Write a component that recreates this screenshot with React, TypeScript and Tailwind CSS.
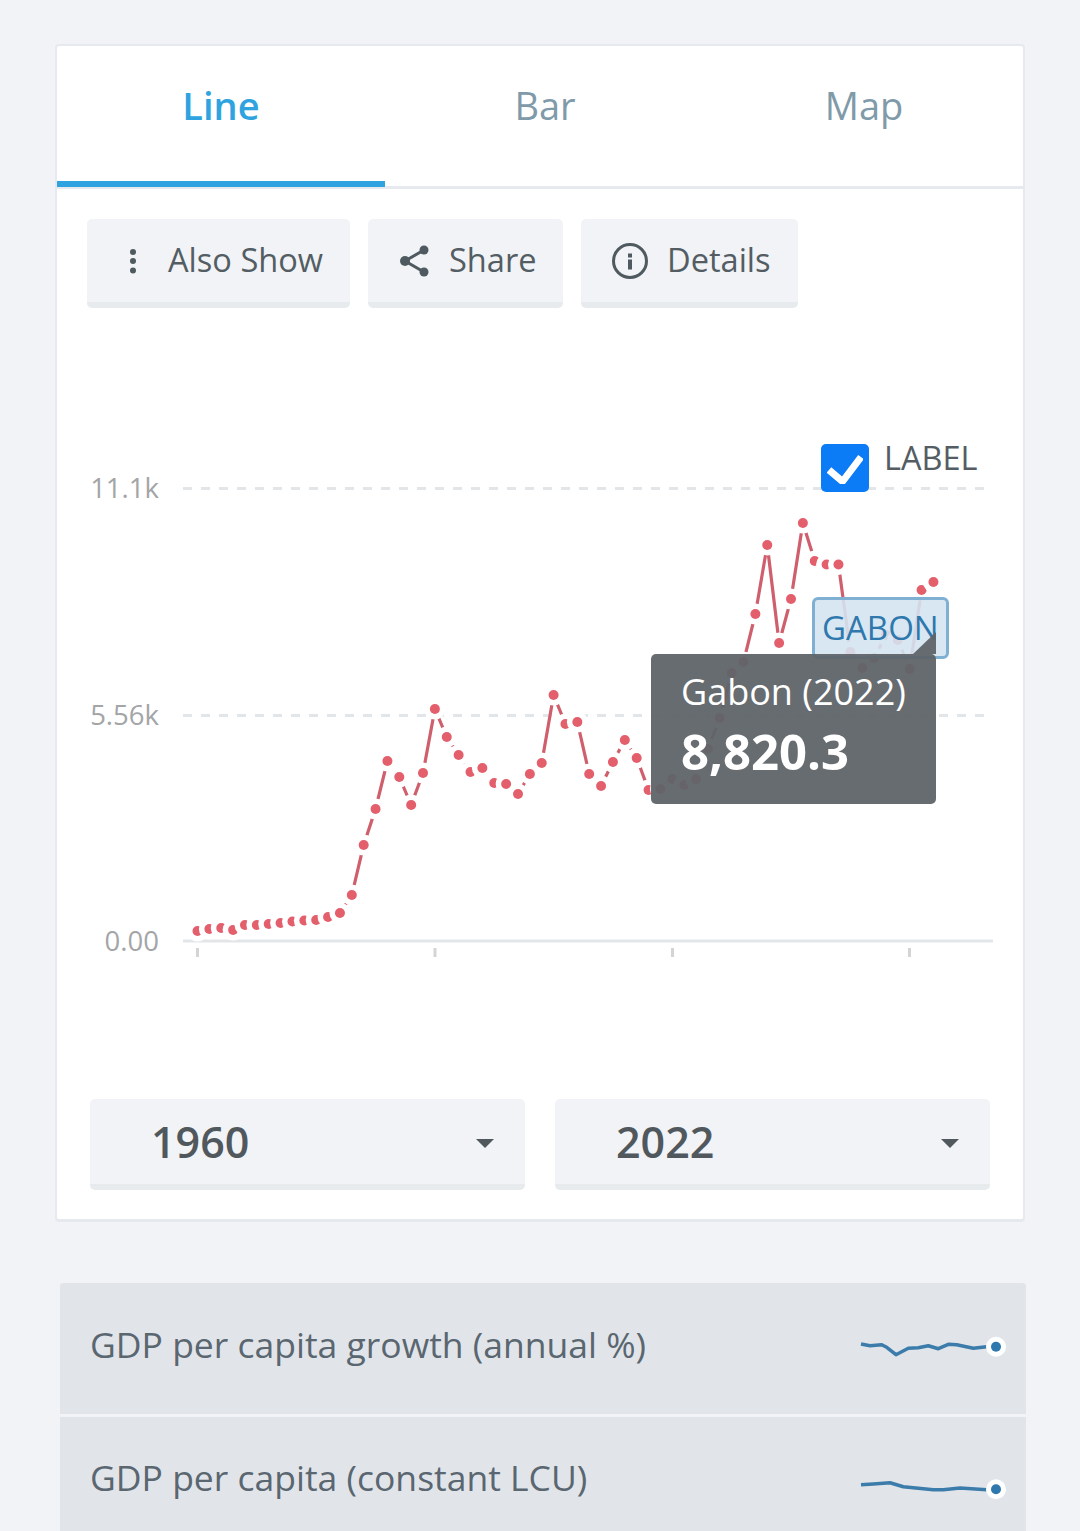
const YS = [
  931, 929, 928, 930, 925, 925, 924, 923, 921.5, 920.5, 920, 917, 913, 895, 845, 809, 761, 777, 805, 773, 709,
  737, 755, 772, 768, 783, 784, 794, 774, 763, 695, 724, 722, 774, 786, 762, 740, 758, 790, 789, 779, 785, 779,
  749, 718, 673, 662, 614, 545, 643, 599, 523, 561, 564.5, 564.5, 652, 668, 658, 635, 640, 669, 590, 582,
]
const POINTS = YS.map((y, i) => ({ x: 197.5 + i * 11.87, y }))

function ToolButton({ width, icon, label }: { width: string; icon: React.ReactNode; label: string }) {
  return (
    <button className={`${width} h-[89px] flex items-center rounded-[5px] bg-[#f1f3f6] border-b-[6px] border-[#e8ebee] text-[32.600px] font-normal text-[#535d63]`}>
      {icon}
      {label}
    </button>
  )
}

function YearSelect({ year }: { year: string }) {
  return (
    <div className="w-[435px] h-[91px] flex items-center justify-between pl-[61px] pr-[31px] rounded-[5px] bg-[#f1f3f6] border-b-[6px] border-[#e8ebee]">
      <span className="pt-[2px] text-[43px] font-semibold text-[#50585d]">{year}</span>
      <svg width="18" height="9" viewBox="0 0 18 9" className="mt-[3px]">
        <path d="M0 0h18L9 9z" fill="#50585d" />
      </svg>
    </div>
  )
}

function LineChart() {
  return (
    <svg viewBox="57 308 966 791" className="absolute inset-0 w-[966px] h-[791px]">
      <g stroke="#e3e6e9" strokeWidth="3" strokeDasharray="9 9">
        <line x1="183" y1="488.5" x2="985" y2="488.5" />
        <line x1="183" y1="715.5" x2="985" y2="715.5" />
      </g>
      <line x1="183" y1="941" x2="993" y2="941" stroke="#e3e6e9" strokeWidth="3" />
      <g stroke="#d4d4d4" strokeWidth="3">
        <line x1="197.5" y1="948" x2="197.5" y2="957" />
        <line x1="435" y1="948" x2="435" y2="957" />
        <line x1="672.5" y1="948" x2="672.5" y2="957" />
        <line x1="909.5" y1="948" x2="909.5" y2="957" />
      </g>
      <g fill="#a3a5a7" fontSize="27.5" textAnchor="end">
        <text x="159" y="498">11.1k</text>
        <text x="159" y="725">5.56k</text>
        <text x="159" y="951">0.00</text>
      </g>
      <polyline points={POINTS.map((p) => `${p.x},${p.y}`).join(" ")} fill="none" stroke="#cf5f6c" strokeWidth="3.2" />
      {POINTS.map((p, i) => (
        <g key={i}>
          <circle cx={p.x} cy={p.y} r="10.5" fill="#fff" />
          <circle cx={p.x} cy={p.y} r="5" fill="#e35f6c" />
        </g>
      ))}
    </svg>
  )
}

function Sparkline({ d, cy }: { d: string; cy: number }) {
  return (
    <svg viewBox="0 0 160 40" className="w-[160px] h-[40px] mb-[6px]">
      <path d={d} fill="none" stroke="#3b7cab" strokeWidth="3.500" strokeLinejoin="round" />
      <circle cx="136" cy={cy} r="10" fill="#fff" />
      <circle cx="136" cy={cy} r="5" fill="#2e78ad" />
    </svg>
  )
}

export default function App() {
  return (
    <div className="h-[1531px] overflow-hidden bg-[#f1f3f7] pt-[44px] font-['Open_Sans','Noto_Sans',sans-serif]">
      <div className="ml-[55px] w-[970px] h-[1178px] rounded-[4px] border-2 border-b-[3px] border-[#e6e9ed] bg-white">
        <div className="flex items-start h-[143px] border-b-[3px] border-[#e6e9ed] text-[38px] leading-[52px]">
          <div className="w-[328px] h-[141px] pt-[33px] text-center font-semibold text-[#2fa3e0] border-b-[6px] border-[#2fa3e0]">Line</div>
          <div className="w-[320px] pt-[33px] text-center text-[#7f9aa8]">Bar</div>
          <div className="flex-1 pt-[33px] text-center text-[#7f9aa8]">Map</div>
        </div>

        <div className="flex gap-[18px] pl-[30px] pt-[30px]">
          <ToolButton
            width="w-[263px]"
            label="Also Show"
            icon={
              <svg width="8" height="26" viewBox="0 0 8 26" className="ml-[42px] mr-[31px]">
                <circle cx="4" cy="4" r="3" fill="#4f5a60" />
                <circle cx="4" cy="13" r="3" fill="#4f5a60" />
                <circle cx="4" cy="22.500" r="3" fill="#4f5a60" />
              </svg>
            }
          />
          <ToolButton
            width="w-[195px]"
            label="Share"
            icon={
              <svg width="32" height="34" viewBox="0 0 32 34" className="ml-[31px] mr-[18px]">
                <path d="M25 6 6 17l19 11" fill="none" stroke="#4f5a60" strokeWidth="3" />
                <circle cx="25" cy="6" r="4.500" fill="#4f5a60" />
                <circle cx="6" cy="17" r="5" fill="#4f5a60" />
                <circle cx="25" cy="28" r="4.500" fill="#4f5a60" />
              </svg>
            }
          />
          <ToolButton
            width="w-[217px]"
            label="Details"
            icon={
              <svg width="38" height="38" viewBox="0 0 38 38" className="ml-[30px] mr-[18px]">
                <circle cx="19" cy="19" r="16.500" fill="none" stroke="#4f5a60" strokeWidth="3" />
                <rect x="17" y="17.500" width="4" height="10" fill="#4f5a60" />
                <rect x="17" y="11.500" width="4" height="4" fill="#4f5a60" />
              </svg>
            }
          />
        </div>

        <div className="relative h-[791px]">
          <LineChart />

          {/* LABEL toggle sits over the top gridline */}
          <div className="absolute left-[764px] top-[136px] w-[48px] h-[48px] rounded-[5px] bg-[#0b7bf6] flex items-center justify-center">
            <svg width="36" height="32" viewBox="0 0 36 32">
              <path d="M2 18 15.500 29.500 34 5" fill="none" stroke="#fff" strokeWidth="7" />
            </svg>
          </div>
          <div className="absolute left-[827px] top-[127px] text-[32.500px] leading-[46px] font-normal text-[#535d63]">LABEL</div>

          <div className="absolute left-[755px] top-[289px] w-[137px] h-[62px] rounded-[6px] border-[3px] border-[#7fb0d2] bg-[#d4e4f1]/90 pl-[7px] text-[33px] leading-[55px] text-[#2e78ad]">GABON</div>

          <div className="absolute left-[594px] top-[346px] w-[285px] h-[150px] rounded-[5px] bg-[#5f6469]/95 pl-[30px] pt-[15px] text-white">
            <div className="text-[36px] leading-[46px] font-normal">Gabon (2022)</div>
            <div className="text-[49px] leading-[72px] font-bold">8,820.3</div>
            <div className="absolute right-0 top-[-22px] w-0 h-0 border-l-[23px] border-b-[22px] border-l-transparent border-b-[#5f6469]/95" />
          </div>
        </div>

        <div className="flex gap-[30px] pl-[33px]">
          <YearSelect year="1960" />
          <YearSelect year="2022" />
        </div>
      </div>

      <div className="ml-[60px] mt-[61px] w-[966px] flex flex-col gap-[3px] text-[35.500px] font-normal text-[#5a6670]">
        <div className="h-[131px] rounded-t-[3px] bg-[#e1e5ea] flex items-center justify-between pl-[30px] pr-[6px]">
          <span className="mb-[8px]">GDP per capita growth (annual %)</span>
          <Sparkline cy={20.7} d="M1 18 10 19.700 21.700 18.700 26.700 21.300 36 28.700 48.300 22.300 58.300 21.700 68.300 19.700 78.300 22.700 88.300 18.300 96.700 18.700 113.300 22.300 126.700 20.700" />
        </div>
        <div className="h-[131px] bg-[#e1e5ea] flex items-center justify-between pl-[30px] pr-[6px]">
          <span className="mb-[10px]">GDP per capita (constant LCU)</span>
          <Sparkline cy={29.300} d="M1 24.700 13.300 24 30 22.700 43.300 26.700 73.300 29.700 83.300 29.700 100 28 126.700 29.700" />
        </div>
      </div>
    </div>
  )
}
